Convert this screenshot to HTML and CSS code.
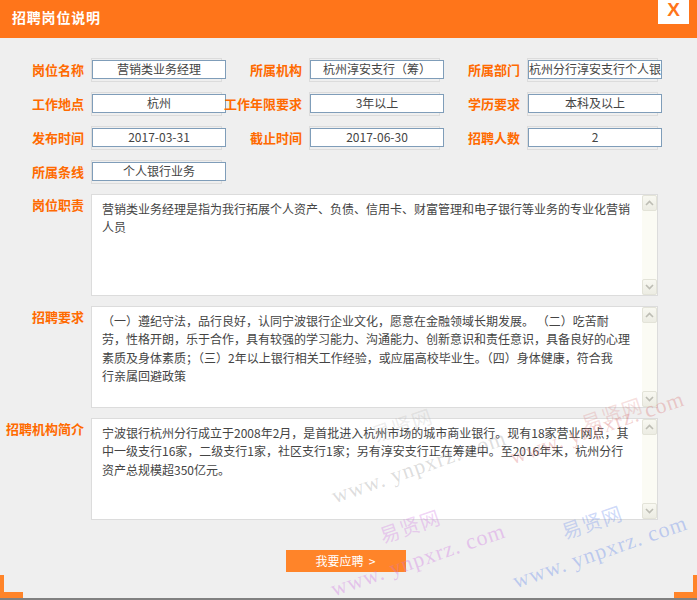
FILE: index.html
```html
<!DOCTYPE html>
<html lang="zh-CN">
<head>
<meta charset="utf-8">
<title>招聘岗位说明</title>
<link rel="stylesheet" href="styles.css">
</head>
<body>
<div class="page">
  <header class="hd">
    <h1 class="hd-title">招聘岗位说明</h1>
    <span class="close">X</span>
  </header>

  <main class="content">
    <div class="grid">
      <span class="lbl">岗位名称</span>
      <span class="field"><span class="val">营销类业务经理</span></span>
      <span class="lbl">所属机构</span>
      <span class="field"><span class="val">杭州淳安支行（筹）</span></span>
      <span class="lbl">所属部门</span>
      <span class="field"><span class="val">杭州分行淳安支行个人银行部</span></span>

      <span class="lbl">工作地点</span>
      <span class="field"><span class="val">杭州</span></span>
      <span class="lbl">工作年限要求</span>
      <span class="field"><span class="val">3年以上</span></span>
      <span class="lbl">学历要求</span>
      <span class="field"><span class="val">本科及以上</span></span>

      <span class="lbl">发布时间</span>
      <span class="field"><span class="val">2017-03-31</span></span>
      <span class="lbl">截止时间</span>
      <span class="field"><span class="val">2017-06-30</span></span>
      <span class="lbl">招聘人数</span>
      <span class="field"><span class="val">2</span></span>

      <span class="lbl">所属条线</span>
      <span class="field"><span class="val">个人银行业务</span></span>
    </div>

    <div class="block">
      <span class="blbl">岗位职责</span>
      <div class="ta">
        <div class="ta-text">营销类业务经理是指为我行拓展个人资产、负债、信用卡、财富管理和电子银行等业务的专业化营销<br>人员</div>
        <div class="sb">
          <span class="sb-btn"><svg width="9" height="6" viewBox="0 0 9 6"><polyline points="1,5 4.5,1.5 8,5" fill="none" stroke="#bdbdb4" stroke-width="1.6"/></svg></span>
          <span class="sb-btn"><svg width="9" height="6" viewBox="0 0 9 6"><polyline points="1,1 4.5,4.5 8,1" fill="none" stroke="#bdbdb4" stroke-width="1.6"/></svg></span>
        </div>
      </div>
    </div>

    <div class="block">
      <span class="blbl">招聘要求</span>
      <div class="ta">
        <div class="ta-text">（一）遵纪守法，品行良好，认同宁波银行企业文化，愿意在金融领域长期发展。 （二）吃苦耐<br>劳，性格开朗，乐于合作，具有较强的学习能力、沟通能力、创新意识和责任意识，具备良好的心理<br>素质及身体素质；（三）2年以上银行相关工作经验，或应届高校毕业生。（四）身体健康，符合我<br>行亲属回避政策</div>
        <div class="sb">
          <span class="sb-btn"><svg width="9" height="6" viewBox="0 0 9 6"><polyline points="1,5 4.5,1.5 8,5" fill="none" stroke="#bdbdb4" stroke-width="1.6"/></svg></span>
          <span class="sb-btn"><svg width="9" height="6" viewBox="0 0 9 6"><polyline points="1,1 4.5,4.5 8,1" fill="none" stroke="#bdbdb4" stroke-width="1.6"/></svg></span>
        </div>
      </div>
    </div>

    <div class="block">
      <span class="blbl">招聘机构简介</span>
      <div class="ta">
        <div class="ta-text">宁波银行杭州分行成立于2008年2月，是首批进入杭州市场的城市商业银行。现有18家营业网点，其<br>中一级支行16家，二级支行1家，社区支行1家；另有淳安支行正在筹建中。至2016年末，杭州分行<br>资产总规模超350亿元。</div>
        <div class="sb">
          <span class="sb-btn"><svg width="9" height="6" viewBox="0 0 9 6"><polyline points="1,5 4.5,1.5 8,5" fill="none" stroke="#bdbdb4" stroke-width="1.6"/></svg></span>
          <span class="sb-btn"><svg width="9" height="6" viewBox="0 0 9 6"><polyline points="1,1 4.5,4.5 8,1" fill="none" stroke="#bdbdb4" stroke-width="1.6"/></svg></span>
        </div>
      </div>
    </div>

    <div class="actions">
      <button class="apply" type="button">我要应聘 &nbsp;&gt;</button>
    </div>
  </main>

  <footer class="ft">
    <span class="corner corner-l"></span>
    <span class="corner corner-r"></span>
  </footer>

  <div class="wm wm-gray-cn">易贤网</div>
  <div class="wm wm-gray">www. ynpxrz. com</div>
  <div class="wm wm-red-cn">易贤网</div>
  <div class="wm wm-red">www. ynpxrz. com</div>
  <div class="wm wm-pink-cn">易贤网</div>
  <div class="wm wm-pink">www. ynpxrz. com</div>
  <div class="wm wm-blue-cn">易贤网</div>
  <div class="wm wm-blue">www. ynpxrz. com</div>
</div>
</body>
</html>
```

FILE: styles.css
```css
* { box-sizing: border-box; }

html, body {
  margin: 0;
  padding: 0;
  background: #efefef;
}

body {
  font-family: "Noto Sans CJK SC", "Liberation Sans", sans-serif;
  font-size: 12px;
  color: #444;
}

.page {
  position: relative;
  width: 697px;
  height: 600px;
  display: flex;
  flex-direction: column;
  overflow: hidden;
}

/* header */
.hd {
  height: 38px;
  background: #ff751a;
  display: flex;
  justify-content: space-between;
  align-items: flex-start;
  padding: 0 8px 0 12px;
  flex-shrink: 0;
}

.hd-title {
  margin: 0;
  padding-top: 7px;
  font-size: 14px;
  line-height: 20px;
  font-weight: bold;
  color: #fff;
  letter-spacing: 0.8px;
}

.close {
  width: 31px;
  height: 24px;
  background: #fff;
  color: #ff751a;
  font-family: "Liberation Sans", Arial, sans-serif;
  font-weight: bold;
  font-size: 19px;
  line-height: 20px;
  text-align: center;
}

/* content */
.content {
  padding: 20px 0 0 4px;
}

.grid {
  display: grid;
  grid-template-columns: 87px 131px 87px 131px 87px 131px;
  grid-auto-rows: 24px;
  row-gap: 10px;
}

.lbl {
  padding-right: 7px;
  text-align: right;
  white-space: nowrap;
  font-size: 13px;
  font-weight: bold;
  color: #ff6a00;
  line-height: 24px;
}

.field {
  display: block;
  width: 131px;
  height: 24px;
  border: 1px solid #dcdcdc;
}

.val {
  display: block;
  width: 134px;
  height: 19px;
  margin-top: 1px;
  border: 1px solid #7f9db9;
  background: #fff;
  text-align: center;
  line-height: 16px;
  font-size: 12px;
  color: #444;
  white-space: nowrap;
  overflow: hidden;
}

/* text areas */
.block {
  display: flex;
  margin-top: 10px;
}

.blbl {
  width: 87px;
  padding: 2px 7px 0 0;
  text-align: right;
  white-space: nowrap;
  font-size: 13px;
  font-weight: bold;
  color: #ff6a00;
  line-height: 18px;
}

.ta {
  width: 567px;
  height: 102px;
  border: 1px solid #dcdcdc;
  background: #fff;
  display: flex;
}

.ta-text {
  flex: 1;
  padding: 5px 8px 0 10px;
  line-height: 18.3px;
  font-size: 12px;
  color: #444;
  white-space: nowrap;
  overflow: hidden;
}

.sb {
  width: 15px;
  background: #fbfbf4;
  display: flex;
  flex-direction: column;
  justify-content: space-between;
}

.sb-btn {
  width: 15px;
  height: 16px;
  border: 1px solid #e3e3d8;
  border-radius: 2px;
  background: linear-gradient(#f8f8f1, #ecece3);
  display: flex;
  align-items: center;
  justify-content: center;
}

/* action */
.actions {
  display: flex;
  justify-content: center;
  padding-right: 10px;
  margin-top: 30px;
}

.apply {
  width: 120px;
  height: 22px;
  border: 0;
  padding: 0;
  background: #ff8429;
  color: #fff;
  font-family: "Noto Sans CJK SC", "Liberation Sans", sans-serif;
  font-size: 12px;
  line-height: 22px;
}

/* footer */
.ft {
  margin-top: auto;
  display: flex;
  justify-content: space-between;
  border-bottom: 2px solid #808080;
}

.corner {
  width: 23px;
  height: 23px;
  border-bottom: 6px solid #ff8429;
}

.corner-l { border-left: 4px solid #ff8429; }
.corner-r { border-right: 4px solid #ff8429; }

/* watermarks */
.wm {
  position: absolute;
  transform: translate(-50%, -50%) rotate(-19deg);
  white-space: nowrap;
  pointer-events: none;
  font-family: "Liberation Serif", serif;
  font-size: 22px;
  letter-spacing: 1px;
  line-height: 1;
}

.wm-gray { left: 419px; top: 467px; color: rgba(150, 150, 150, 0.32); }
.wm-gray-cn { left: 402px; top: 425px; color: rgba(150, 150, 150, 0.18); font-family: "Noto Sans CJK SC", serif; font-size: 20px; }
.wm-red { left: 597px; top: 428px; color: rgba(215, 110, 110, 0.32); }
.wm-red-cn { left: 612px; top: 414px; color: rgba(215, 110, 110, 0.22); font-family: "Noto Sans CJK SC", serif; font-size: 20px; }
.wm-pink { left: 418px; top: 560px; color: rgba(205, 110, 225, 0.35); }
.wm-pink-cn { left: 410px; top: 526px; color: rgba(205, 110, 225, 0.3); font-family: "Noto Sans CJK SC", serif; font-size: 20px; }
.wm-blue { left: 600px; top: 552px; color: rgba(90, 130, 235, 0.35); }
.wm-blue-cn { left: 592px; top: 522px; color: rgba(90, 130, 235, 0.3); font-family: "Noto Sans CJK SC", serif; font-size: 20px; }
```
